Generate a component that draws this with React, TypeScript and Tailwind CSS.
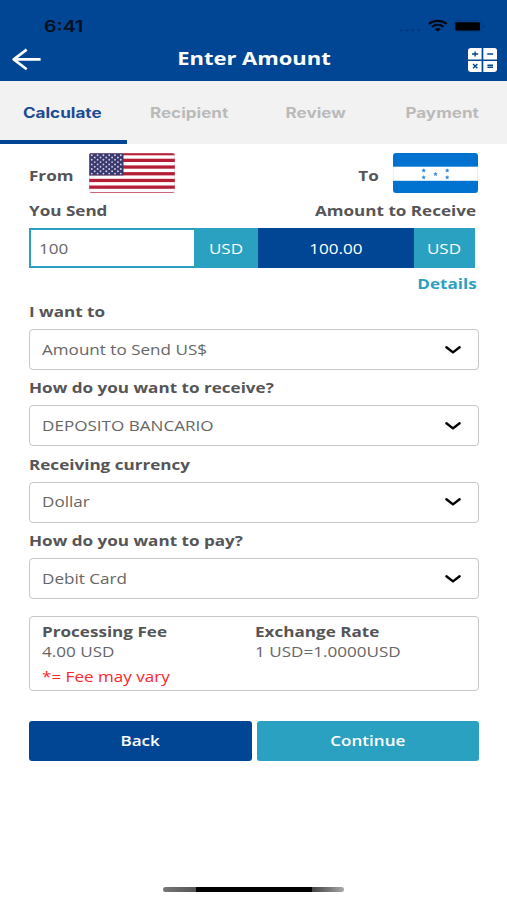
import React from 'react';
import { clsx } from 'clsx';

type WideProps = {
  children: React.ReactNode;
  className?: string;
  origin?: 'left' | 'center' | 'right';
};

// Extended-width text, the glyphs are stretched horizontally
const Wide = ({ children, className, origin = 'left' }: WideProps) => (
  <span
    className={clsx(
      'inline-block whitespace-nowrap scale-x-[1.22]',
      origin === 'left' && 'origin-left',
      origin === 'center' && 'origin-center',
      origin === 'right' && 'origin-right',
      className
    )}
  >
    {children}
  </span>
);

const tabs = ['Calculate', 'Recipient', 'Review', 'Payment'];

const fields = [
  { label: 'I want to', value: 'Amount to Send US$' },
  { label: 'How do you want to receive?', value: 'DEPOSITO BANCARIO' },
  { label: 'Receiving currency', value: 'Dollar' },
  { label: 'How do you want to pay?', value: 'Debit Card' },
];

const UsFlag = () => (
  <svg width="86" height="40" viewBox="0 0 86 40" className="rounded-[3px]">
    <rect width="86" height="40" fill="#fff" />
    {[-1, 5.7, 12.4, 19.1, 25.8, 32.5, 39.2].map((y) => (
      <rect key={y} y={y} width="86" height="3.3" fill="#b41f37" />
    ))}
    <rect width="34.5" height="22.4" fill="#39386f" />
    {[0, 1, 2, 3, 4, 5, 6, 7, 8].map((row) =>
      (row % 2 ? [0, 1, 2, 3, 4] : [0, 1, 2, 3, 4, 5]).map((col) => (
        <circle
          key={`${row}-${col}`}
          cx={2.8 + col * 5.8 + (row % 2 ? 2.9 : 0)}
          cy={2.2 + row * 2.3}
          r="0.95"
          fill="#d0d0e0"
        />
      ))
    )}
    <rect x="0.5" y="0.5" width="85" height="39" rx="3" fill="none" stroke="#d99aa4" strokeOpacity="0.35" />
  </svg>
);

const HondurasFlag = () => (
  <svg width="85" height="40" viewBox="0 0 85 40" className="rounded-[3px]">
    <rect width="85" height="40" fill="#fff" />
    <rect width="85" height="13.7" fill="#0073d1" />
    <rect y="27.8" width="85" height="12.2" fill="#0073d1" />
    <path d="M0.3 13.7V27.8M84.6 13.7V27.8" stroke="#e4e4e8" strokeWidth="0.7" />
    {[[30.7, 17.3], [30.7, 24.2], [42.5, 20.9], [54.2, 17.3], [54.2, 24.2]].map(([x, y]) => (
      <path
        key={`${x}-${y}`}
        d={`M${x} ${y - 1.5}l.5 1 1.1.1-.8.8.2 1.2-1-.6-1 .6.2-1.2-.8-.8 1.1-.1z`}
        fill="#2a86d8"
        stroke="#2a86d8"
        strokeWidth="0.6"
      />
    ))}
  </svg>
);

const StatusBar = () => (
  <div className="flex h-[37px] items-end justify-between pl-[44px] pr-[21px]">
    <Wide className="mb-[1px] font-[Inter] text-[16px] leading-[20px] font-semibold text-[#04101f]">6:41</Wide>
    <svg width="88" height="16" viewBox="0 0 88 16" className="mb-[3px]">
      <g fill="#06357a">
        <circle cx="3" cy="12.3" r="1.3" />
        <circle cx="8.8" cy="12.3" r="1.3" />
        <circle cx="14.6" cy="12.3" r="1.3" />
        <circle cx="20.4" cy="12.3" r="1.3" />
      </g>
      <g fill="none" stroke="#000814">
        <path d="M30.8 5.9C36 1.9 43.5 1.9 48.7 5.9" strokeWidth="2.3" />
        <path d="M34 8.9C37.4 6.3 42.1 6.3 45.5 8.9" strokeWidth="2.2" />
      </g>
      <path d="M36.7 11C38.5 9.6 41 9.6 42.8 11L39.75 13.8z" fill="#000814" />
      <rect x="55.9" y="2.7" width="27.6" height="11" rx="2.5" fill="none" stroke="#063b80" />
      <rect x="57.4" y="4.2" width="24.6" height="8.2" rx="1" fill="#000" />
      <path d="M85.2 6.6c2 .6 2 2.8 0 3.4z" fill="#06336f" />
    </svg>
  </div>
);

const CalculatorIcon = () => (
  <svg width="30" height="24" viewBox="0 0 30 24">
    <path d="M3 0H13.6V11.4H0V2.5Q0 0 3 0z" fill="#fff" />
    <path d="M15.3 0H26.4Q29 0 29 2.5V11.4H15.3z" fill="#fff" />
    <path d="M0 12.9H13.6V24H2.5Q0 24 0 21.6z" fill="#fff" />
    <path d="M15.3 12.9H29V21.6Q29 24 26.5 24H15.3z" fill="#fff" />
    <path
      d="M4 6H10.2M7.1 3.4V8.6M19.2 6H25.2M5 16L9.4 20.2M9.4 16L5 20.2M19.4 17.2H25M19.4 19.3H25"
      stroke="#004694"
      strokeWidth="1.4"
      fill="none"
    />
  </svg>
);

const App = () => {
  return (
    <div className="flex h-[900px] w-[507px] flex-col overflow-hidden bg-white font-['Open_Sans',sans-serif] text-[14px] leading-[20px] text-[#555557]">
      {/* Header */}
      <header className="h-[81px] shrink-0 bg-[#004694]">
        <StatusBar />
        <div className="grid h-[43px] grid-cols-[60px_1fr_60px] items-center text-white">
          <svg width="30" height="24" viewBox="0 0 30 24" className="ml-3">
            <path
              d="M28.6 12.4H1.7M14.7 2.6L1.7 12.4L14.7 22.2"
              fill="none"
              stroke="currentColor"
              strokeWidth="2.6"
              strokeLinejoin="round"
            />
          </svg>
          <h1 className="text-center">
            <Wide origin="center" className="text-[18px] font-bold">Enter Amount</Wide>
          </h1>
          <div className="flex justify-end pt-[2px] pr-[9px]">
            <CalculatorIcon />
          </div>
        </div>
      </header>

      {/* Steps */}
      <nav className="grid h-[63px] shrink-0 grid-cols-4 bg-[#f2f2f2] pr-[1px] font-[Inter]">
        {tabs.map((tab, index) => (
          <div
            key={tab}
            className={clsx(
              'flex items-center justify-center border-b-4 pt-[5px] pr-[2px]',
              index === 0 ? 'border-[#004694] text-[#1c4a94]' : 'border-transparent text-[#bababa]'
            )}
          >
            <Wide origin="center" className="text-[14px] font-bold">{tab}</Wide>
          </div>
        ))}
      </nav>

      <main className="flex flex-1 flex-col pr-[28px] pl-[29px]">
        <div className="mt-[9px] flex h-10 items-center pr-[1px]">
          <Wide className="w-[60px] pt-[5px] font-bold">From</Wide>
          <UsFlag />
          <div className="flex-1 pt-[5px] pr-[14px] text-right">
            <Wide origin="right" className="font-bold">To</Wide>
          </div>
          <HondurasFlag />
        </div>

        <div className="flex h-[35px] items-center justify-between pr-[3px] font-bold">
          <Wide>You Send</Wide>
          <Wide origin="right">Amount to Receive</Wide>
        </div>

        {/* Amounts */}
        <div className="mr-[4px] flex h-10 text-white">
          <div className="flex w-[165px] items-center border-2 border-r-0 border-[#2ba1c1] bg-white pt-px pl-[8px] text-[#666]">
            <Wide>100</Wide>
          </div>
          <div className="flex w-[64px] items-center justify-center bg-[#2ba1c1] pt-px">
            <Wide origin="center">USD</Wide>
          </div>
          <div className="flex w-[156px] items-center justify-center bg-[#004694] pt-px">
            <Wide origin="center">100.00</Wide>
          </div>
          <div className="flex flex-1 items-center justify-center bg-[#2ba1c1] pt-px">
            <Wide origin="center">USD</Wide>
          </div>
        </div>

        <div className="flex h-[30px] items-center justify-end pt-[2px] pr-[2px] font-bold text-[#2ba1c1]">
          <Wide origin="right">Details</Wide>
        </div>

        {fields.map((field) => (
          <div key={field.label} className="flex h-[76.2px] flex-col">
            <div className="h-[31.2px] pt-[4.2px] font-bold">
              <Wide>{field.label}</Wide>
            </div>
            <div className="flex h-[41px] items-center justify-between rounded-[4px] border-[1.5px] border-[#c6c6c6] pt-[0.5px] pr-[16px] pl-[12.4px] text-[#666]">
              <Wide>{field.value}</Wide>
              <svg width="18" height="12" viewBox="0 0 18 12">
                <path d="M2.4 3.3L9 8.4L15.6 3.3" fill="none" stroke="#000" strokeWidth="2.4" strokeLinecap="round" strokeLinejoin="round" />
              </svg>
            </div>
          </div>
        ))}

        {/* Fee box */}
        <div className="mt-[13.5px] h-[75px] shrink-0 rounded-[4px] border-[1.5px] border-[#c6c6c6] pt-[4.7px] pl-[12.4px] text-[#666]">
          <div className="grid grid-cols-[212.5px_1fr]">
            <Wide className="font-bold text-[#555557]">Processing Fee</Wide>
            <Wide className="font-bold text-[#555557]">Exchange Rate</Wide>
            <Wide>4.00 USD</Wide>
            <Wide>1 USD=1.0000USD</Wide>
          </div>
          <div className="mt-[5px] text-[#fa2828]">
            <Wide>*= Fee may vary</Wide>
          </div>
        </div>

        <div className="mt-[29.5px] grid h-10 grid-cols-2 gap-[5px] font-semibold text-white">
          <button className="rounded-[3px] bg-[#004694]">
            <Wide origin="center">Back</Wide>
          </button>
          <button className="rounded-[3px] bg-[#2ba1c1]">
            <Wide origin="center">Continue</Wide>
          </button>
        </div>
      </main>

      {/* Home indicator */}
      <div className="mb-[8px] flex h-[5px] shrink-0 justify-center">
        <div className="flex w-[181px] justify-center overflow-hidden rounded-full">
          <div className="flex-1 bg-linear-to-r from-[#777] to-[#555]" />
          <div className="w-[116px] bg-black" />
          <div className="flex-1 bg-linear-to-r from-[#444] to-[#aaa]" />
        </div>
      </div>
    </div>
  );
};

export default App;
